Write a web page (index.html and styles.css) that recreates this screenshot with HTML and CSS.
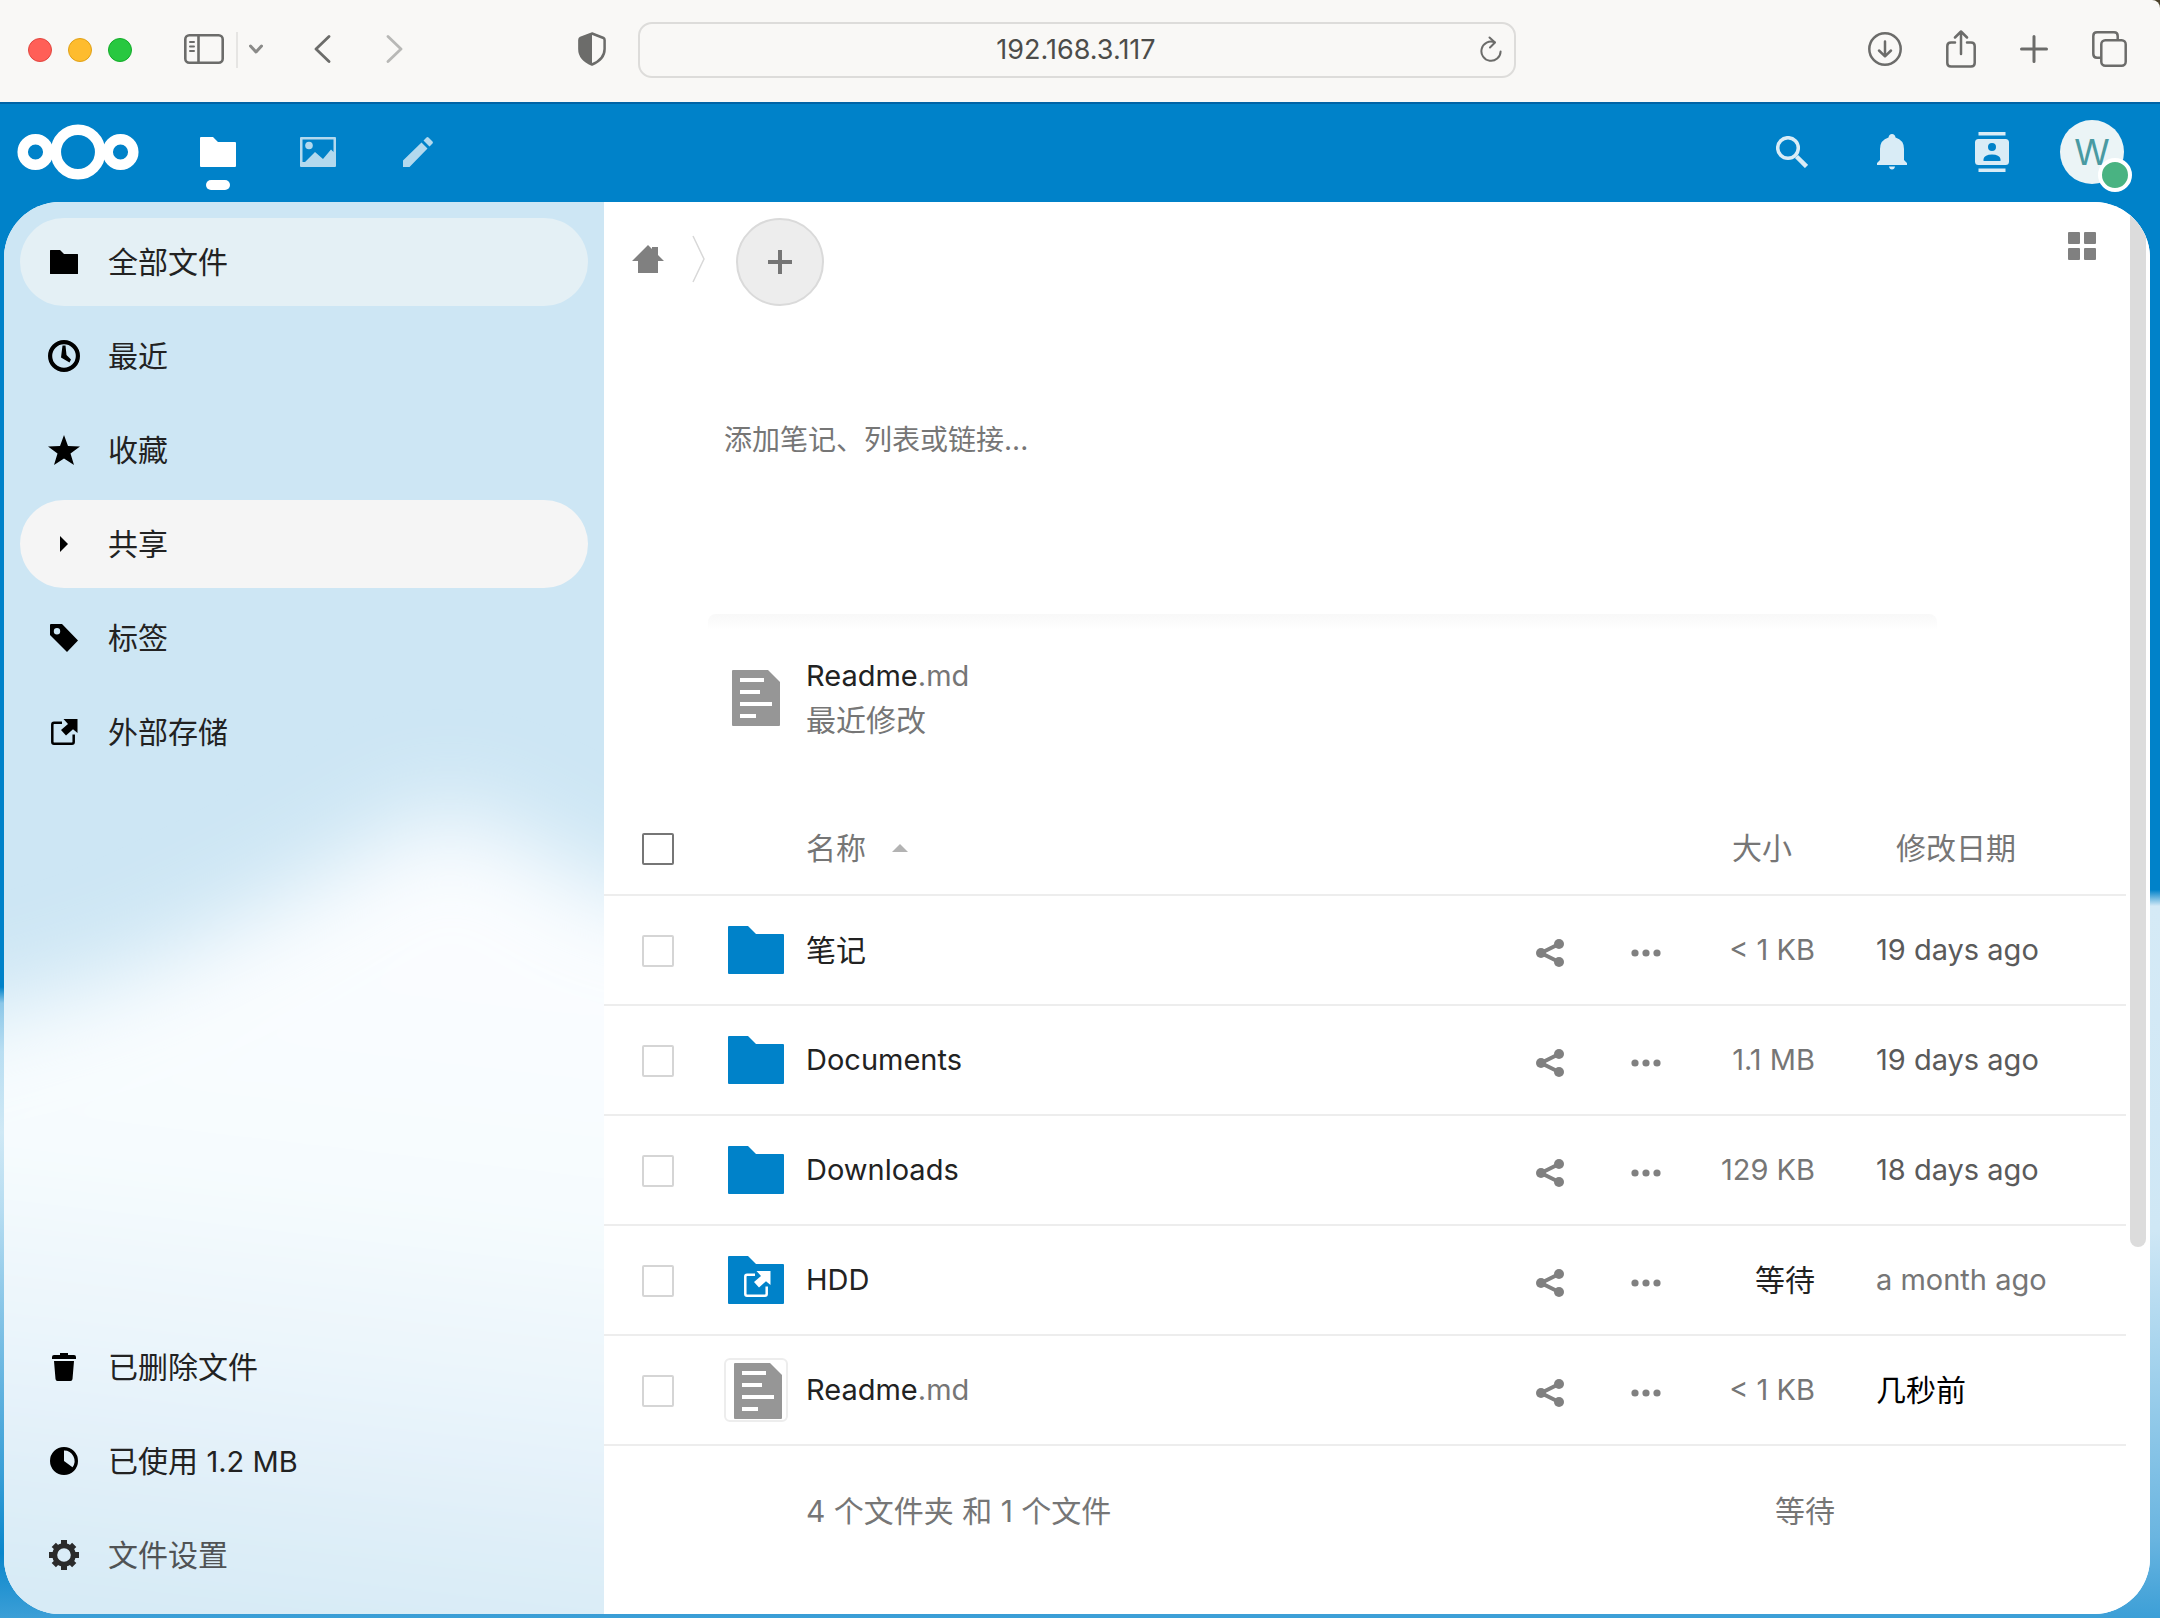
FILE: index.html
```html
<!DOCTYPE html>
<html lang="zh-CN">
<head>
<meta charset="utf-8">
<meta name="viewport" content="width=device-width, initial-scale=1">
<title>全部文件 - Nextcloud</title>
<link rel="stylesheet" href="styles.css">
</head>
<body>
<svg class="sprite" aria-hidden="true">
  <symbol id="folder" viewBox="0 0 56 48"><path d="M1 0H20L28 8H55Q56 8 56 9V47Q56 48 55 48H1Q0 48 0 47V1Q0 0 1 0Z"/></symbol>
  <symbol id="external" viewBox="0 0 27 26"><path d="M11 3.8H3Q1.3 3.8 1.3 5.500V23Q1.300 24.700 3 24.700H21Q22.700 24.700 22.700 23V15.500" fill="none" stroke="currentColor" stroke-width="2.500"/><path d="M12.500 0H26.500V14L22 10.300L15 16.500L10 11L17 5Z"/></symbol>
  <symbol id="document" viewBox="0 0 48 56"><path d="M1 0H36L48 12V55Q48 56 47 56H1Q0 56 0 55V1Q0 0 1 0Z"/><path d="M8 8h24v4H8zM8 20h20v4H8zM8 32h32v4H8zM8 44h16v4H8z" fill="#fff"/></symbol>
  <symbol id="share" viewBox="0 0 28 28"><path d="M23 5L5 14L23 23" fill="none" stroke="currentColor" stroke-width="4"/><circle cx="5" cy="14" r="5"/><circle cx="23" cy="5" r="5"/><circle cx="23" cy="23" r="5"/></symbol>
  <symbol id="more" viewBox="0 0 30 8"><circle cx="4" cy="4" r="3.600"/><circle cx="15" cy="4" r="3.600"/><circle cx="26" cy="4" r="3.600"/></symbol>
</svg>

<div class="browser">
  <div class="browser-bar">
    <div class="bar-left">
      <div class="lights"><i class="light red"></i><i class="light yellow"></i><i class="light green"></i></div>
      <button class="bar-button sidebar-toggle" aria-label="边栏"><svg width="40" height="30" viewBox="0 0 40 30" fill="none" stroke="currentColor" stroke-width="2.600" stroke-linecap="round"><rect x="1.300" y="1.300" width="37.400" height="27.400" rx="4"/><path d="M14.500 1.500V28.500"/><path d="M6 8h4M6 12.500h4M6 17h4" stroke-width="2"/></svg></button>
      <i class="bar-divider"></i>
      <button class="bar-button dim" aria-label="标签组"><svg width="14" height="10" viewBox="0 0 14 10" fill="none" stroke="currentColor" stroke-width="3" stroke-linecap="round" stroke-linejoin="round"><path d="M1.500 2L7 8L12.500 2"/></svg></button>
      <button class="bar-button back" aria-label="后退"><svg width="17" height="28" viewBox="0 0 17 28" fill="none" stroke="currentColor" stroke-width="2.800" stroke-linecap="round" stroke-linejoin="round"><path d="M15 1.500L2 14L15 26.500"/></svg></button>
      <button class="bar-button forward" aria-label="前进" disabled><svg width="17" height="28" viewBox="0 0 17 28" fill="none" stroke="currentColor" stroke-width="2.800" stroke-linecap="round" stroke-linejoin="round"><path d="M2 1.500L15 14L2 26.500"/></svg></button>
      <button class="bar-button shield" aria-label="隐私报告"><svg width="28" height="34" viewBox="0 0 28 34"><path d="M14 1.500L25.500 6Q26.600 6.500 26.600 8V17C26.600 25 20 30 14 32.500C8 30 1.400 25 1.400 17V8Q1.400 6.500 2.500 6Z" fill="none" stroke="currentColor" stroke-width="2.500"/><path d="M14 1V33C7 30 1 25 1 17V7L14 1Z" fill="currentColor"/></svg></button>
    </div>
    <div class="address">
      <input class="address-input" type="text" value="192.168.3.117" aria-label="地址">
      <button class="bar-button reload" aria-label="重新载入"><svg width="22" height="27" viewBox="0 0 22 27" fill="none" stroke="currentColor" stroke-width="2" stroke-linecap="round" stroke-linejoin="round"><path d="M14.500 6.300A9.600 9.600 0 1 0 20.600 15.500"/><path d="M9.500 1.500L15 6.500L10 11.500"/></svg></button>
    </div>
    <div class="bar-right">
      <button class="bar-button" aria-label="下载"><svg width="34" height="34" viewBox="0 0 34 34" fill="none" stroke="currentColor" stroke-width="2.500" stroke-linecap="round" stroke-linejoin="round"><circle cx="17" cy="17" r="15.700"/><path d="M17 9.500V24M11 18.500L17 24.300L23 18.500"/></svg></button>
      <button class="bar-button" aria-label="共享"><svg width="30" height="38" viewBox="0 0 30 38" fill="none" stroke="currentColor" stroke-width="2.500" stroke-linecap="round" stroke-linejoin="round"><path d="M9 12.500H5Q1.300 12.500 1.300 16V33Q1.300 36.500 5 36.500H25Q28.700 36.500 28.700 33V16Q28.700 12.500 25 12.500H21"/><path d="M15 24V1.500M9 7.500L15 1.500L21 7.500"/></svg></button>
      <button class="bar-button" aria-label="新标签页"><svg width="28" height="28" viewBox="0 0 28 28" stroke="currentColor" stroke-width="3" stroke-linecap="round"><path d="M14 1.500V26.500M1.500 14H26.500"/></svg></button>
      <button class="bar-button" aria-label="标签页概览"><svg width="35" height="36" viewBox="0 0 35 36" fill="none" stroke="currentColor" stroke-width="2.500" stroke-linejoin="round"><path d="M9 26.700H5Q1.300 26.700 1.300 23V5Q1.300 1.300 5 1.300H22Q25.700 1.300 25.700 5V9"/><rect x="9.300" y="9.300" width="24.400" height="25.400" rx="4"/></svg></button>
    </div>
  </div>
</div>

<header class="app-header">
  <a class="logo" href="#" aria-label="Nextcloud"><svg width="122" height="56" viewBox="0 0 122 56" fill="none" stroke="#fff"><circle cx="61" cy="28" r="22.200" stroke-width="10.500"/><circle cx="18.500" cy="28" r="12.800" stroke-width="10.500"/><circle cx="103.500" cy="28" r="12.800" stroke-width="10.500"/></svg></a>
  <nav class="app-menu" aria-label="应用">
    <a class="app-link current" href="#" aria-label="文件"><svg width="36" height="30" viewBox="0 0 36 30" fill="#fff"><path d="M1 0H13L18 5H35Q36 5 36 6V29Q36 30 35 30H1Q0 30 0 29V1Q0 0 1 0Z"/></svg></a>
    <a class="app-link" href="#" aria-label="照片"><svg width="36" height="30" viewBox="0 0 36 30" fill="#fff"><path fill-rule="evenodd" d="M1 0H35Q36 0 36 1V29Q36 30 35 30H1Q0 30 0 29V1Q0 0 1 0ZM2.500 2.500V25H5L15 15L23 22L31 12.500L33.500 15V2.500Z"/><circle cx="9" cy="8.500" r="3.800"/></svg></a>
    <a class="app-link" href="#" aria-label="文本"><svg width="30" height="30" viewBox="0 0 30 30" fill="#fff"><path d="M18.500 5.500L24.500 11.500L6.500 30H0V23.500ZM20.500 3.500L23.500 .5Q24.500 -.3 25.500 .5L29.500 4.500Q30.300 5.500 29.500 6.500L26.500 9.500Z"/></svg></a>
  </nav>
  <div class="header-tools">
    <button class="header-button" aria-label="搜索"><svg width="32" height="32" viewBox="0 0 32 32" fill="none" stroke="#fff"><circle cx="12" cy="12" r="10.300" stroke-width="3.500"/><path d="M20.500 20.500L30.500 30.500" stroke-width="4.500"/></svg></button>
    <button class="header-button" aria-label="通知"><svg width="30" height="36" viewBox="0 0 30 36" fill="#fff"><path d="M15 0Q18 0 18.500 3.500Q27 6 27 15V26L30 29V31H0V29L3 26V15Q3 6 11.500 3.500Q12 0 15 0ZM12 32.500H18Q17.500 35.500 15 35.500T12 32.500Z"/></svg></button>
    <button class="header-button" aria-label="联系人"><svg width="34" height="40" viewBox="0 0 34 40" fill="#fff"><path fill-rule="evenodd" d="M3.500 0H30.500V3.500H3.500ZM3.500 36.500H30.500V40H3.500ZM3.500 7H30.500Q34 7 34 10.500V29.500Q34 33 30.500 33H3.500Q0 33 0 29.500V10.500Q0 7 3.500 7ZM17 11A4 4 0 1 0 17 19A4 4 0 1 0 17 11ZM8.500 29H25.500V27Q24.500 22.500 17 22.500T8.500 27Z"/></svg></button>
    <button class="header-button user" aria-label="用户菜单"><span class="avatar">W<i class="status"></i></span></button>
  </div>
</header>

<div class="content">
  <nav class="sidebar" aria-label="文件导航">
    <svg class="clouds" viewBox="0 0 600 1412" preserveAspectRatio="none" aria-hidden="true">
      <defs>
        <filter id="soft" x="-20%" y="-20%" width="140%" height="140%"><feGaussianBlur stdDeviation="46"/></filter>
        <linearGradient id="cloud" gradientUnits="userSpaceOnUse" x1="240" y1="640" x2="150" y2="1412">
          <stop offset="0" stop-color="#fbfdff"/><stop offset=".4" stop-color="#f7fcfe"/><stop offset=".65" stop-color="#ebf5fb"/><stop offset="1" stop-color="#d6eaf6"/>
        </linearGradient>
      </defs>
      <path d="M-160 840L0 808L130 768L260 706L360 650L440 606L520 640L600 688L760 720V1600H-160Z" fill="url(#cloud)" filter="url(#soft)"/>
    </svg>
    <ul class="nav-list">
      <li><a class="nav-item active" href="#"><span class="nav-icon"><svg width="28" height="24"><use href="#folder"/></svg></span>全部文件</a></li>
      <li><a class="nav-item" href="#"><span class="nav-icon"><svg width="32" height="32" viewBox="0 0 32 32"><circle cx="16" cy="16" r="13.900" fill="none" stroke="#000" stroke-width="4.200"/><path d="M14.500 5.500H17.500L18.500 15L23 19.500L21.500 22.500L13 17.500Z"/></svg></span>最近</a></li>
      <li><a class="nav-item" href="#"><span class="nav-icon"><svg width="32" height="30" viewBox="0 0 32 30"><path d="M16 0L20 11L32 11.400L22.500 18.500L26 30L16 23.500L6 30L9.500 18.500L0 11.400L12 11Z"/></svg></span>收藏</a></li>
      <li><a class="nav-item hover" href="#"><span class="nav-icon"><svg width="8" height="16" viewBox="0 0 8 16"><path d="M0 0L8 8L0 16Z"/></svg></span>共享</a></li>
      <li><a class="nav-item" href="#"><span class="nav-icon"><svg width="28" height="28" viewBox="0 0 28 28"><path fill-rule="evenodd" d="M1 0H12L28 16.500L17 28L0 11V1Q0 0 1 0ZM7 4A3.200 3.200 0 1 0 7 10.400A3.200 3.200 0 1 0 7 4Z"/></svg></span>标签</a></li>
      <li><a class="nav-item" href="#"><span class="nav-icon"><svg width="27" height="26"><use href="#external"/></svg></span>外部存储</a></li>
    </ul>
    <ul class="nav-list">
      <li><a class="nav-item" href="#"><span class="nav-icon"><svg width="24" height="28" viewBox="0 0 24 28"><path d="M8 0H16V2H22Q24 2 24 4V6H0V4Q0 2 2 2H8ZM2 8H22L20.500 26Q20.300 28 18.500 28H5.500Q3.700 28 3.500 26Z"/></svg></span>已删除文件</a></li>
      <li><a class="nav-item" href="#"><span class="nav-icon"><svg width="28" height="28" viewBox="0 0 28 28"><path fill-rule="evenodd" d="M14 0A14 14 0 1 0 14 28A14 14 0 1 0 14 0ZM14 3.500A10.500 10.500 0 0 1 22.500 20.200L14 14Z"/></svg></span><span>已使用 <span class="latin">1.2 MB</span></span></a></li>
      <li><button class="nav-item settings" type="button"><span class="nav-icon"><svg width="30" height="30" viewBox="-15 -15 30 30" fill="none" stroke="#2b2b2b"><circle r="9.300" stroke-width="5"/><path d="M0 -15V-10M0 15V10M-15 0H-10M15 0H10M-10.200 -10.200L-7 -7M10.200 -10.200L7 -7M-10.200 10.200L-7 7M10.200 10.200L7 7" stroke-width="6"/></svg></span>文件设置</button></li>
    </ul>
  </nav>

  <main class="files">
    <div class="controls">
      <div class="crumbs">
        <a class="home" href="#" aria-label="主页"><svg width="32" height="28" viewBox="0 0 32 28" fill="#808080"><path d="M16 0L20 4V2H26V10L32 16H26V28H6V16H0Z"/></svg></a>
        <svg width="13" height="48" viewBox="0 0 13 48" fill="none" stroke="#d8d8d8" stroke-width="1.500"><path d="M1 1L12 24L1 47"/></svg>
      </div>
      <button class="add" aria-label="新建"><svg width="24" height="24" viewBox="0 0 24 24" stroke="#757575" stroke-width="4"><path d="M12 0V24M0 12H24"/></svg></button>
      <button class="view-toggle" aria-label="网格视图"><svg width="28" height="28" viewBox="0 0 28 28" fill="#808080"><rect width="12" height="12" rx="1"/><rect x="16" width="12" height="12" rx="1"/><rect y="16" width="12" height="12" rx="1"/><rect x="16" y="16" width="12" height="12" rx="1"/></svg></button>
    </div>

    <textarea class="notes" aria-label="笔记" placeholder="添加笔记、列表或链接..."></textarea>
    <div class="notes-shadow"></div>

    <a class="recommended" href="#">
      <span class="thumb"><svg width="48" height="56" fill="#969696"><use href="#document"/></svg></span>
      <span class="recommended-text"><span class="latin">Readme<span class="ext">.md</span></span><span class="reason">最近修改</span></span>
    </a>

    <table class="file-table">
      <thead>
        <tr>
          <th class="col-check"><input class="check check-all" type="checkbox" aria-label="全选"></th>
          <th class="col-name"><button class="sort">名称<svg width="16" height="8" viewBox="0 0 16 8" fill="#b3b3b3"><path d="M8 0L16 8H0Z"/></svg></button></th>
          <th class="col-size">大小</th>
          <th class="col-date">修改日期</th>
        </tr>
      </thead>
      <tbody>
        <tr>
          <td class="col-check"><input class="check" type="checkbox" aria-label="选择 笔记"></td>
          <td><div class="name-cell"><a class="file" href="#"><span class="thumb"><svg class="blue" width="56" height="48"><use href="#folder"/></svg></span><span>笔记</span></a><span class="actions"><button class="action" aria-label="共享"><svg width="28" height="28"><use href="#share"/></svg></button><button class="action" aria-label="更多"><svg width="30" height="8"><use href="#more"/></svg></button></span></div></td>
          <td class="size latin">&lt; 1 KB</td>
          <td class="date latin">19 days ago</td>
        </tr>
        <tr>
          <td class="col-check"><input class="check" type="checkbox" aria-label="选择 Documents"></td>
          <td><div class="name-cell"><a class="file" href="#"><span class="thumb"><svg class="blue" width="56" height="48"><use href="#folder"/></svg></span><span class="latin">Documents</span></a><span class="actions"><button class="action" aria-label="共享"><svg width="28" height="28"><use href="#share"/></svg></button><button class="action" aria-label="更多"><svg width="30" height="8"><use href="#more"/></svg></button></span></div></td>
          <td class="size latin">1.1 MB</td>
          <td class="date latin">19 days ago</td>
        </tr>
        <tr>
          <td class="col-check"><input class="check" type="checkbox" aria-label="选择 Downloads"></td>
          <td><div class="name-cell"><a class="file" href="#"><span class="thumb"><svg class="blue" width="56" height="48"><use href="#folder"/></svg></span><span class="latin">Downloads</span></a><span class="actions"><button class="action" aria-label="共享"><svg width="28" height="28"><use href="#share"/></svg></button><button class="action" aria-label="更多"><svg width="30" height="8"><use href="#more"/></svg></button></span></div></td>
          <td class="size latin">129 KB</td>
          <td class="date latin">18 days ago</td>
        </tr>
        <tr>
          <td class="col-check"><input class="check" type="checkbox" aria-label="选择 HDD"></td>
          <td><div class="name-cell"><a class="file" href="#"><span class="thumb"><svg class="blue" width="56" height="48" viewBox="0 0 56 48"><use href="#folder" width="56" height="48"/><use class="mark" href="#external" x="16" y="15" width="27" height="26"/></svg></span><span class="latin">HDD</span></a><span class="actions"><button class="action" aria-label="共享"><svg width="28" height="28"><use href="#share"/></svg></button><button class="action" aria-label="更多"><svg width="30" height="8"><use href="#more"/></svg></button></span></div></td>
          <td class="size pending">等待</td>
          <td class="date latin old">a month ago</td>
        </tr>
        <tr>
          <td class="col-check"><input class="check" type="checkbox" aria-label="选择 Readme.md"></td>
          <td><div class="name-cell"><a class="file" href="#"><span class="thumb framed"><svg width="48" height="56" fill="#969696"><use href="#document"/></svg></span><span class="latin">Readme<span class="ext">.md</span></span></a><span class="actions"><button class="action" aria-label="共享"><svg width="28" height="28"><use href="#share"/></svg></button><button class="action" aria-label="更多"><svg width="30" height="8"><use href="#more"/></svg></button></span></div></td>
          <td class="size latin">&lt; 1 KB</td>
          <td class="date recent">几秒前</td>
        </tr>
      </tbody>
      <tfoot>
        <tr>
          <td></td>
          <td class="summary">4 个文件夹 和 1 个文件</td>
          <td class="total" colspan="2">等待</td>
        </tr>
      </tfoot>
    </table>
    <div class="scrollbar"></div>
  </main>
</div>
</body>
</html>
```

FILE: styles.css
```css
* { box-sizing: border-box; }

body {
  margin: 0;
  min-height: 100vh;
  display: flex;
  flex-direction: column;
  font: 30px/44px Inter, "Noto Sans CJK SC", sans-serif;
  color: #222;
  background:
    linear-gradient(to bottom, #0082c9 0 61%, #8cc7e8 62%, #b9def2 65%, #cfe8f5 70%, #b5dcf1 75%, #7fc1e5 82%, #3a9fd7 91%, #0a86cb 96%, #3c9fd7 100%) left / 50% 100% no-repeat,
    linear-gradient(to bottom, #0082c9 0 55%, #d5eaf6 56%, #cfe7f5 76%, #a5d3ed 84%, #6ab5e0 95%, #3c9fd7 100%) right / 50% 100% no-repeat;
}

button {
  margin: 0;
  padding: 0;
  border: 0;
  background: none;
  font: inherit;
  color: inherit;
}

a { color: inherit; text-decoration: none; }
svg { display: block; flex: none; }
.sprite { position: absolute; width: 0; height: 0; }
.latin { font-size: 29px; }

/* Browser toolbar */
.browser { background: #4a4028; }

.browser-bar {
  display: grid;
  grid-template-columns: 638px 1fr 644px;
  align-items: center;
  height: 102px;
  padding-bottom: 2px;
  background: #f9f8f6;
  border-top-right-radius: 8px;
  color: #6c6c6a;
}

.bar-left { display: flex; align-items: center; padding: 0 32px 0 28px; }
.bar-button { padding-bottom: 2px; }
.lights { display: flex; gap: 16px; margin-right: 52px; }
.light { width: 24px; height: 24px; border-radius: 50%; border: 1px solid; }
.red { background: #ff5f57; border-color: #e2463f; }
.yellow { background: #febc2e; border-color: #e1a116; }
.green { background: #28c840; border-color: #12ac28; }
.bar-divider { width: 2px; height: 36px; margin: 0 11px 0 12px; background: #e6e5e3; }
.dim { color: #8a8a88; }
.back { margin-left: 51px; }
.forward { margin-left: 55px; color: #b8b8b6; }
.shield { margin-left: auto; }

.address {
  display: flex;
  align-items: center;
  height: 56px;
  padding: 0 12px 0 32px;
  border: 2px solid #dddcda;
  border-radius: 14px;
}

.address-input {
  flex: 1;
  min-width: 0;
  border: 0;
  outline: 0;
  padding: 0;
  background: none;
  font: 27px/32px Inter, sans-serif;
  color: #4c4c4a;
  text-align: center;
}

.bar-right { display: flex; align-items: center; justify-content: flex-end; gap: 44px; padding-right: 33px; }

/* Application header */
.app-header {
  display: flex;
  align-items: center;
  height: 100px;
  padding: 0 18px 0 17px;
  background: #0082c9;
  box-shadow: inset 0 2px #0063a5;
}

.app-menu { display: flex; margin-left: 29px; }

.app-link {
  position: relative;
  display: flex;
  align-items: center;
  justify-content: center;
  width: 100px;
  height: 100px;
}

.app-link svg { opacity: .7; }
.app-link.current svg { opacity: 1; }

.app-link.current::after {
  content: "";
  position: absolute;
  left: 38px;
  bottom: 12px;
  width: 24px;
  height: 10px;
  border-radius: 5px;
  background: #fff;
}

.header-tools { display: flex; margin-left: auto; }

.header-button {
  display: flex;
  align-items: center;
  justify-content: center;
  width: 100px;
  height: 100px;
}

.header-button svg { opacity: .85; }

.avatar {
  position: relative;
  width: 64px;
  height: 64px;
  border-radius: 50%;
  background: #ebf4f6;
  font-size: 36px;
  line-height: 64px;
  text-align: center;
  color: #499aa2;
}

.status {
  position: absolute;
  right: -8px;
  bottom: -8px;
  width: 34px;
  height: 34px;
  border: 4px solid #fff;
  border-radius: 50%;
  background: #49b382;
}

/* Content shell */
.content {
  flex: 1;
  display: flex;
  margin: 0 10px 4px 4px;
  border-radius: 56px;
  overflow: hidden;
  background: #fff;
}

.sidebar {
  position: relative;
  flex: none;
  width: 600px;
  display: flex;
  flex-direction: column;
  justify-content: space-between;
  padding: 16px 16px 15px;
  background: #cde6f4;
}

.clouds { position: absolute; inset: 0; width: 100%; height: 100%; }

.nav-list {
  position: relative;
  display: flex;
  flex-direction: column;
  gap: 6px;
  margin: 0;
  padding: 0;
  list-style: none;
}

.nav-item {
  display: flex;
  align-items: center;
  width: 100%;
  height: 88px;
  border-radius: 44px;
}

.nav-item.active { background: #e4f0f5; }
.nav-item.hover { background: #f5f5f5; }
.nav-icon { display: flex; justify-content: center; width: 88px; color: #000; fill: #000; }
.settings { color: #505355; }

/* File list */
.files {
  position: relative;
  flex: 1;
  min-width: 0;
  background: #fff;
}

.controls { display: flex; align-items: center; padding: 16px 40px 0 28px; }
.crumbs { display: flex; align-items: center; gap: 28px; padding-bottom: 6px; }

.add {
  display: flex;
  align-items: center;
  justify-content: center;
  width: 88px;
  height: 88px;
  margin-left: 31px;
  border: 2px solid #dadada;
  border-radius: 50%;
  background: #ededed;
}

.view-toggle {
  display: flex;
  align-items: center;
  justify-content: center;
  align-self: flex-start;
  width: 56px;
  height: 56px;
  margin-left: auto;
}

.notes {
  display: block;
  width: calc(100% - 317px);
  height: 196px;
  margin: 112px 0 0 104px;
  padding: 0 16px;
  border: 0;
  outline: 0;
  resize: none;
  background: none;
  font: 28px/44px Inter, "Noto Sans CJK SC", sans-serif;
  color: #222;
}

.notes::placeholder { color: #767676; opacity: 1; }

.notes-shadow {
  width: calc(100% - 317px);
  height: 16px;
  margin-left: 104px;
  border-radius: 8px 8px 0 0;
  background: linear-gradient(#f8f8f8, #fff);
}

.recommended { display: flex; align-items: center; gap: 18px; margin: 24px 0 59px 120px; }
.recommended-text { display: flex; flex-direction: column; }
.reason, .ext { color: #767676; }

.thumb {
  display: flex;
  align-items: center;
  justify-content: center;
  flex: none;
  width: 64px;
  height: 64px;
}

.thumb.framed {
  padding: 2px 0 0 4px;
  border: 2px solid #ededed;
  border-radius: 6px;
}

.blue { fill: #0082c9; }
.mark { fill: #fff; color: #fff; }

.file-table {
  width: calc(100% - 24px);
  border-collapse: collapse;
  table-layout: fixed;
}

th, td { padding: 0; font-weight: 400; text-align: left; vertical-align: middle; }
thead th { height: 94px; color: #767676; border-bottom: 2px solid #ededed; }
tbody td { height: 110px; border-bottom: 2px solid #ededed; }
.col-check { width: 120px; padding: 2px 0 0 38px; }
th.col-size { width: 125px; padding-right: 23px; text-align: right; }
th.col-date { width: 311px; padding-left: 81px; }

.check {
  display: block;
  appearance: none;
  width: 32px;
  height: 32px;
  margin: 0;
  border: 2px solid #d5d5d5;
  border-radius: 2px;
  background: #fff;
}

.check-all { border-color: #767676; }

.sort { display: flex; align-items: center; gap: 26px; margin-left: 82px; }
.name-cell { display: flex; align-items: center; justify-content: space-between; }
.file { display: flex; align-items: center; gap: 18px; }
.actions { display: flex; gap: 8px; padding-top: 6px; }

.action {
  display: flex;
  align-items: center;
  justify-content: center;
  width: 88px;
  height: 88px;
  color: #808080;
  fill: #808080;
}

.size { text-align: right; color: #767676; }
.pending { color: #222; }
.date { padding-left: 61px; color: #5a5a5a; }
.date.old { color: #767676; }
.date.recent { color: #000; }
tfoot td { height: 130px; color: #767676; }
.summary { padding-left: 82px; }
.total { padding-left: 85px; }

.scrollbar {
  position: absolute;
  top: 0;
  right: 4px;
  width: 16px;
  height: 74%;
  border-radius: 0 0 8px 8px;
  background: #dcdcdc;
}
```
